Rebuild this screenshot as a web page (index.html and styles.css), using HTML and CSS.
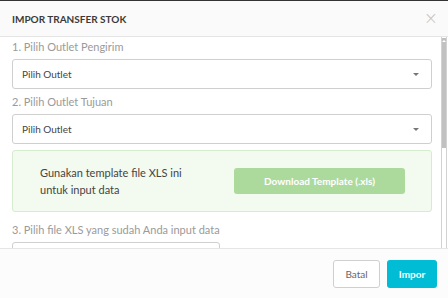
FILE: index.html
```html
<!DOCTYPE html>
<html lang="id">
<head>
  <meta charset="UTF-8">
  <title>Impor Transfer Stok</title>
  <link rel="stylesheet" href="styles.css">
</head>
<body>
  <div class="modal">
    <div class="modal-header">
      <h4 class="modal-title">IMPOR TRANSFER STOK</h4>
      <button class="close-button" aria-label="Tutup">&times;</button>
    </div>

    <div class="modal-body">
      <div class="modal-content">
        <label class="step-label">1. Pilih Outlet Pengirim</label>
        <div class="select-box">
          <span>Pilih Outlet</span>
          <span class="caret"></span>
        </div>

        <label class="step-label">2. Pilih Outlet Tujuan</label>
        <div class="select-box">
          <span>Pilih Outlet</span>
          <span class="caret"></span>
        </div>

        <div class="template-box">
          <p>Gunakan template file XLS ini untuk input data</p>
          <button class="download-button">Download Template (.xls)</button>
        </div>

        <label class="step-label">3. Pilih file XLS yang sudah Anda input data</label>
        <div class="file-input"></div>
      </div>

      <!-- scrollbar drawn by hand, the headless shot hides the native one -->
      <div class="scrollbar">
        <div class="scrollbar-thumb">
          <span class="scrollbar-arrow"></span>
        </div>
      </div>
    </div>

    <div class="modal-footer">
      <button class="btn btn-cancel">Batal</button>
      <button class="btn btn-primary">Impor</button>
    </div>
  </div>
</body>
</html>
```

FILE: styles.css
```css
html, body {
  margin: 0;
  padding: 0;
  height: 100%;
}

body {
  font-family: "Lato", "Open Sans", sans-serif;
  background-color: #333;
  padding-top: 1px;
  box-sizing: border-box;
}

.modal {
  display: flex;
  flex-direction: column;
  height: 297px;
  background-color: #fff;
}

/* Header */
.modal-header {
  height: 35px;
  display: flex;
  align-items: center;
  justify-content: space-between;
  padding: 0 10px 0 12px;
  background-color: #fafafa;
  border-bottom: 1px solid #e5e5e5;
  flex-shrink: 0;
}

.modal-title {
  margin: 0;
  font-size: 10px;
  font-weight: 700;
  color: #3a3a3a;
}

.close-button {
  background: none;
  border: none;
  font-size: 17px;
  color: #c4c4c4;
  padding: 0;
  line-height: 1;
  cursor: pointer;
  font-family: "DejaVu Sans", sans-serif;
  font-weight: 300;
}

/* Body */
.modal-body {
  flex: 1;
  display: flex;
  overflow: hidden;
  min-height: 0;
}

.modal-content {
  width: 420px;
  padding: 3px 0 0 12px;
  overflow: hidden;
}

.scrollbar {
  width: 4px;
  margin-left: 9px;
  border-left: 1px solid #d2d2d2;
  border-right: 1px solid #d2d2d2;
  background-color: #fff;
}

.scrollbar-thumb {
  height: 110px;
  margin-top: 1px;
  background-color: #c1c1c1;
  display: flex;
  justify-content: center;
  padding-top: 2px;
  box-sizing: border-box;
}

.scrollbar-arrow {
  width: 0;
  height: 0;
  border-left: 2px solid transparent;
  border-right: 2px solid transparent;
  border-bottom: 2px solid #fff;
}

.step-label {
  display: block;
  font-size: 11px;
  line-height: 14px;
  color: #9a9a9a;
  margin-bottom: 5px;
}

.select-box {
  height: 28px;
  display: flex;
  align-items: center;
  justify-content: space-between;
  padding: 0 9px;
  border: 1px solid #cfcfcf;
  border-radius: 3px;
  font-size: 10px;
  color: #444;
  margin-bottom: 6px;
}

.caret {
  width: 0;
  height: 0;
  border-left: 3px solid transparent;
  border-right: 3px solid transparent;
  border-top: 3px solid #777;
  margin-right: 3px;
}

.template-box {
  display: flex;
  align-items: center;
  justify-content: space-between;
  padding: 13px 26px 13px 27px;
  background-color: #f3faef;
  border: 1px solid #d6ecce;
  border-radius: 3px;
  margin-top: 1px;
  margin-bottom: 11px;
}

.template-box p {
  margin: 0;
  width: 160px;
  font-size: 11px;
  line-height: 17px;
  color: #444;
}

.download-button {
  width: 171px;
  height: 26px;
  background-color: #acda9d;
  border: none;
  border-radius: 3px;
  color: #fff;
  font-family: inherit;
  font-size: 10px;
  font-weight: 700;
}

.file-input {
  width: 206px;
  height: 28px;
  border: 1px solid #cfcfcf;
  border-radius: 3px;
}

/* Footer */
.modal-footer {
  height: 49px;
  display: flex;
  align-items: center;
  justify-content: flex-end;
  gap: 7px;
  padding: 0 11px 0 12px;
  background-color: #fcfcfc;
  border-top: 1px solid #e5e5e5;
  flex-shrink: 0;
}

.btn {
  height: 28px;
  border-radius: 3px;
  font-family: inherit;
  font-size: 10px;
  cursor: pointer;
}

.btn-cancel {
  width: 47px;
  background-color: #fff;
  border: 1px solid #cfcfcf;
  color: #666;
}

.btn-primary {
  width: 50px;
  background-color: #00bcd4;
  border: none;
  color: #fff;
  font-weight: 700;
}
```
